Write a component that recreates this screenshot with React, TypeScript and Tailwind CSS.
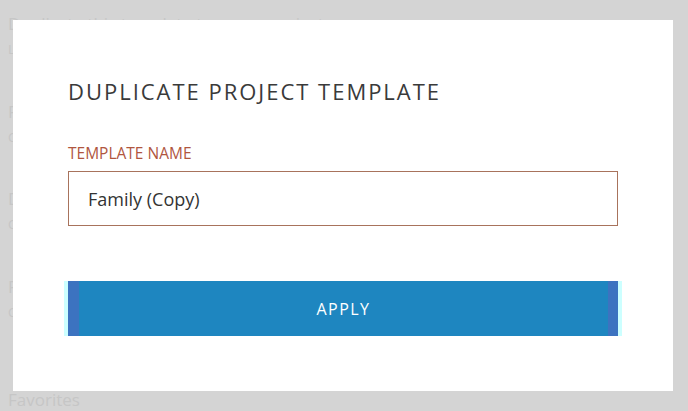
import React from "react";

const bgRows = [
  { title: "Duplicate this template to a new project", sub: "Lorem ipsum dolor" },
  { title: "Family", sub: "Created 2 days ago" },
  { title: "Design", sub: "Created 5 days ago" },
  { title: "Photos", sub: "Created last week" },
];

export default function App() {
  const [name, setName] = React.useState("Family (Copy)");

  return (
    <div
      className="relative h-[411px] w-[688px] overflow-hidden bg-[#d4d4d4]"
      style={{ fontFamily: '"Open Sans", "Noto Sans", sans-serif' }}
    >
      {/* faded page behind the dialog */}
      <div className="flex flex-col gap-10 px-2 pt-3 text-[#c6c6c6]">
        {bgRows.map((r) => (
          <div key={r.title} className="flex flex-col gap-1">
            <span className="text-[17px] leading-6">{r.title}</span>
            <span className="text-[13px]">{r.sub}</span>
          </div>
        ))}
      </div>
      <span className="absolute left-[8px] top-[390px] text-[17px] leading-5 text-[#c6c6c6]">Favorites</span>

      {/* dialog */}
      <div className="absolute left-[13px] top-[20px] flex h-[371px] w-[660px] flex-col bg-white pl-[55px] pr-[55px] pt-[57px]">
        <h2 className="text-[22px] leading-7 tracking-[0.09em] text-[#3a3a3a]">
          DUPLICATE PROJECT TEMPLATE
        </h2>

        <label className="mt-[38px] text-[15.5px] leading-5 text-[#b0563f]">TEMPLATE NAME</label>
        <input
          value={name}
          onChange={(e) => setName(e.target.value)}
          className="mt-[8px] h-[55px] w-[550px] border border-[#a8735c] px-[19px] text-[18px] text-[#333] outline-none"
        />

        <div className="-ml-1 mt-[55px] w-[558px] bg-[#ccffff] px-1">
          <button className="h-[55px] w-full border-l-[11px] border-r-[10px] border-l-[#3c73c0] border-r-[#3c73c0] bg-[#1e86c0] text-[16px] tracking-[0.09em] text-white">
            APPLY
          </button>
        </div>
      </div>
    </div>
  );
}
